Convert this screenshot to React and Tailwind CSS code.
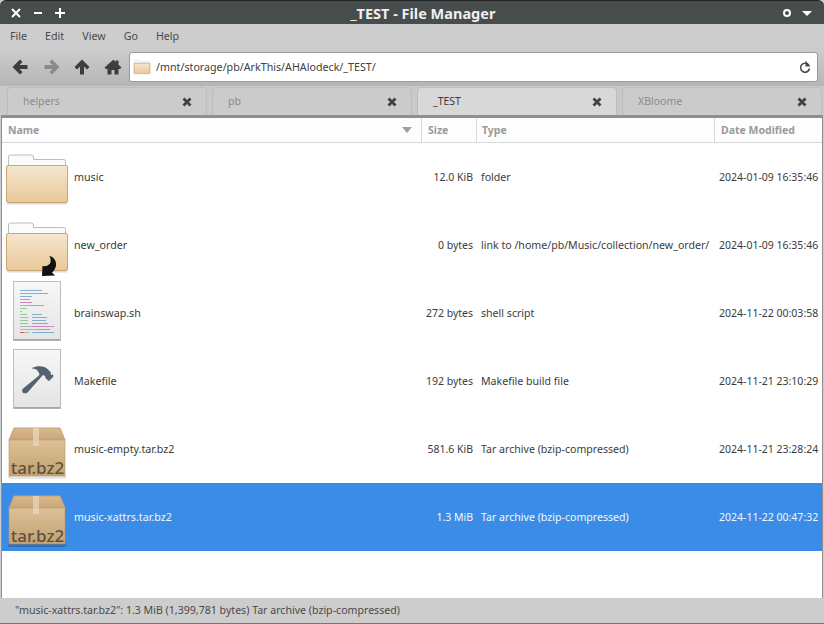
import React from "react";

const rows = [
  { name: "music", size: "12.0 KiB", type: "folder", date: "2024-01-09 16:35:46", icon: "folder" },
  { name: "new_order", size: "0 bytes", type: "link to /home/pb/Music/collection/new_order/", date: "2024-01-09 16:35:46", icon: "link" },
  { name: "brainswap.sh", size: "272 bytes", type: "shell script", date: "2024-11-22 00:03:58", icon: "script" },
  { name: "Makefile", size: "192 bytes", type: "Makefile build file", date: "2024-11-21 23:10:29", icon: "make" },
  { name: "music-empty.tar.bz2", size: "581.6 KiB", type: "Tar archive (bzip-compressed)", date: "2024-11-21 23:28:24", icon: "tar" },
  { name: "music-xattrs.tar.bz2", size: "1.3 MiB", type: "Tar archive (bzip-compressed)", date: "2024-11-22 00:47:32", icon: "tar", selected: true },
];

const tabs = [
  { label: "helpers" },
  { label: "pb" },
  { label: "_TEST", active: true },
  { label: "XBloome" },
];

// [colour, x, y, width] for the tiny code preview on the script icon
const codeLines = [
  ["#6fa8c8", 6, 7, 22], ["#6fa8c8", 6, 11, 28], ["#6fa8c8", 6, 15, 12], ["#6fa8c8", 6, 19, 10],
  ["#c56fc0", 6, 23, 12], ["#c58fb0", 6, 27, 10], ["#6fa8c8", 16, 27, 14], ["#7cc87c", 6, 31, 7],
  ["#aaaaaa", 6, 35, 2], ["#7cc87c", 6, 39, 7], ["#6fa8c8", 18, 39, 10], ["#7cc87c", 6, 43, 8],
  ["#6fa8c8", 18, 43, 15], ["#7cc87c", 6, 47, 8], ["#6fa8c8", 18, 47, 14], ["#7cc87c", 6, 51, 8],
  ["#6fa8c8", 18, 51, 16], ["#aaaaaa", 6, 55, 12], ["#d070b8", 18, 55, 22], ["#aaaaaa", 6, 59, 18],
  ["#d070b8", 24, 59, 12], ["#e53935", 6, 63, 4], ["#aaaaaa", 10, 63, 5], ["#6fa8c8", 18, 63, 22],
];

function FolderIcon({ link, small }) {
  return (
    <svg width={small ? 16 : 62} height={small ? 14 : 50} viewBox="0 0 62 50" preserveAspectRatio="none" className={small ? "overflow-visible" : "overflow-visible mt-[4px]"}>
      <defs>
        <linearGradient id="folderFill" x1="0" y1="0" x2="0" y2="1">
          <stop offset="0" stopColor="#f5e6d0" />
          <stop offset="1" stopColor="#e9c898" />
        </linearGradient>
      </defs>
      <path d="M2.500 12V3q0-2 2-2h21q2 0 2 2V5.500h30q2 0 2 2V12z" fill="#fbfbfb" stroke="#bdbdbd" />
      <rect x="0.500" y="11.500" width="61" height="37" rx="1.500" fill="url(#folderFill)" stroke="#c9a673" strokeWidth={small ? 3 : 1} />
      <rect x="1" y="49" width="60" height="1.500" fill="#dcdcdc" />
      {link && (
        <path d="M36 54 36.500 44c3.500.5 6-.5 7.500-2.500 1-2 1-4.500-.5-7.500 4.500 1 7 5 6.500 9.500-.5 3-2 5.500-4 7l3 3z" fill="#111" />
      )}
    </svg>
  );
}

function ScriptIcon() {
  return (
    <svg width="48" height="60" viewBox="0 0 48 60" className="mb-[4px]">
      <defs>
        <linearGradient id="paper" x1="0" y1="0" x2="0" y2="1">
          <stop offset="0" stopColor="#f7f7f7" />
          <stop offset="1" stopColor="#e4e4e4" />
        </linearGradient>
      </defs>
      <rect x="0.500" y="0.500" width="47" height="59" fill="url(#paper)" stroke="#bdbdbd" />
      <rect x="1" y="58" width="46" height="1.500" fill="#a8a8a8" />
      <g opacity="0.850">
        {codeLines.map(([color, x, y, w], i) => (
          <rect key={i} x={x + 1} y={y * 0.75 + 3.750} width={w} height="1" fill={color} />
        ))}
      </g>
    </svg>
  );
}

function MakeIcon() {
  return (
    <svg width="48" height="60" viewBox="0 0 48 60" className="mb-[4px]">
      <defs>
        <linearGradient id="paper2" x1="0" y1="0" x2="0" y2="1">
          <stop offset="0" stopColor="#f7f7f7" />
          <stop offset="1" stopColor="#e4e4e4" />
        </linearGradient>
      </defs>
      <rect x="0.500" y="0.500" width="47" height="59" fill="url(#paper2)" stroke="#bdbdbd" />
      <rect x="1" y="58" width="46" height="1.500" fill="#a8a8a8" />
      <path d="M19 19c5-2.500 11-2.500 15 .5l4 4-.5 1.500 1 1 1.500-.5 .5 .5-.5 1 .5 .5-4.500 4.500-1-.5-2.500-2.500-.5-2-2-1-15.500 17.500c-1 1-3 1-4.500 .5-1-1-1-3-.5-4L26 26.500 26.500 25l-2-3.500c-1.500-1.500-3.500-2-5.500-2z" fill="#556170" />
    </svg>
  );
}

function TarIcon({ selected }) {
  return (
    <svg width="58" height="52" viewBox="0 0 58 52" className="overflow-visible mt-[8px]">
      <defs>
        <linearGradient id="boxTop" x1="0" y1="0" x2="0" y2="1">
          <stop offset="0" stopColor="#d8b98f" />
          <stop offset="1" stopColor="#c9a677" />
        </linearGradient>
        <linearGradient id="boxFront" x1="0" y1="0" x2="0" y2="1">
          <stop offset="0" stopColor="#dcc096" />
          <stop offset="1" stopColor="#c2a272" />
        </linearGradient>
      </defs>
      <rect x="0" y="47" width="58" height="5" rx="2" fill={selected ? "#2f6fb8" : "#e6e6e6"} />
      <path d="M6 1h46l5 12H1z" fill="url(#boxTop)" stroke="#c4a275" />
      <rect x="1" y="13" width="56" height="36" fill="url(#boxFront)" stroke="#b8966a" strokeWidth="0.600" />
      <rect x="25" y="1" width="6" height="18" fill="#e9d8bd" opacity="0.700" />
      <text x="29.500" y="46.500" textAnchor="middle" fontSize="17" fontWeight="500" fill="#5f5141" fontFamily="'Noto Sans', sans-serif">tar.bz2</text>
    </svg>
  );
}

function RowIcon({ icon, selected }) {
  if (icon === "folder") return <FolderIcon />;
  if (icon === "link") return <FolderIcon link />;
  if (icon === "script") return <ScriptIcon />;
  if (icon === "make") return <MakeIcon />;
  return <TarIcon selected={selected} />;
}

function CloseGlyph() {
  return (
    <svg width="10" height="10" viewBox="0 0 10 10">
      <path d="M1.500 1.500l7 7M8.500 1.500l-7 7" stroke="#3f4243" strokeWidth="2.800" />
    </svg>
  );
}

function Tab({ label, active }) {
  return (
    <div className={`w-[200px] h-[30px] mt-px flex items-center justify-between pl-[15px] pr-[14px] pb-[2px] rounded-t-sm border border-b-0 border-[#bdbdbd] ${active ? "bg-[#d8d8d8] text-[#3b3b3b]" : "bg-[#cbcbcb] text-[#8c8c8c]"}`}>
      <span>{label}</span>
      <CloseGlyph />
    </div>
  );
}

function HeaderCell({ className, children }) {
  return (
    <div className={`flex items-center font-bold text-[#9a9a9a] ${className}`}>{children}</div>
  );
}

function NavIcon({ d, color = "#3d3d3d", w = 16, className }) {
  return (
    <svg width={w} height="16" viewBox={`0 0 ${w} 16`} className={className}>
      <path d={d} fill={color} />
    </svg>
  );
}

export default function App() {
  return (
    <div className="w-[824px] h-[624px] flex flex-col overflow-hidden bg-[#cdcdcd] text-[10.5px] leading-none text-[#3b3b3b] font-['Noto_Sans',sans-serif]">
      {/* titlebar */}
      <div className="h-6 shrink-0 relative flex items-center justify-between px-[11px] rounded-t-md border-t border-[#222] bg-[#474c4d] text-white">
        <div className="flex items-center gap-[12px]">
          <svg width="10" height="10" viewBox="0 0 10 10"><path d="M1 1l8 8M9 1l-8 8" stroke="#fff" strokeWidth="2" /></svg>
          <svg width="10" height="10" viewBox="0 0 10 10"><path d="M1 5h8" stroke="#fff" strokeWidth="2" /></svg>
          <svg width="10" height="10" viewBox="0 0 10 10"><path d="M0 5h10M5 0v10" stroke="#fff" strokeWidth="2" /></svg>
        </div>
        <span className="absolute left-[22px] right-0 top-[5px] text-center text-[14.5px] font-bold text-[#f0f0f0]">_TEST - File Manager</span>
        <div className="flex items-center gap-[10px] pr-[1px]">
          <svg width="10" height="10" viewBox="0 0 10 10"><circle cx="5" cy="5" r="3" fill="none" stroke="#fff" strokeWidth="2" /></svg>
          <svg width="10" height="10" viewBox="0 0 10 10"><path d="M0 3h10L5 8z" fill="#fff" /></svg>
        </div>
      </div>

      {/* menubar */}
      <div className="h-[24px] shrink-0 flex items-center gap-[18px] pl-[10px] pt-[1px] text-[#4a4a4a] text-[10.7px]">
        <span>File</span>
        <span>Edit</span>
        <span>View</span>
        <span>Go</span>
        <span>Help</span>
      </div>

      {/* toolbar */}
      <div className="h-[38px] shrink-0 flex items-center pl-[12px] pr-[6px] bg-gradient-to-b from-[#cdcdcd] to-[#b5b5b5]">
        <NavIcon d="M8 0.500 0.500 8 8 15.500 10.500 13 7.500 10H15.500V6H7.500L10.500 3z" />
        <NavIcon className="ml-[16px]" color="#8a8a8a" d="M8 0.500 15.500 8 8 15.500 5.500 13 8.500 10H0.500V6H8.500L5.500 3z" />
        <NavIcon className="ml-[14px]" d="M8 0.500 15.500 8 13 10.500 10 7.500V15.500H6V7.500L3 10.500 0.500 8z" />
        <NavIcon className="ml-[14px]" w={18} d="M9 1 0.500 8.500 2 10H3.500V15.500H7.500V11H10.500V15.500H14.500V10H16 L17.500 8.500 14.500 5.800V1.500H11.500V3.200L10 1z" />
        <div className="flex-1 h-[30px] ml-[7px] flex items-center justify-between pl-[4px] pr-[5px] bg-white border border-[#9a9a9a] rounded-[3px]">
          <div className="flex items-center gap-[6px] text-[#404040] text-[10.7px]">
            <FolderIcon small />
            <span>/mnt/storage/pb/ArkThis/AHAlodeck/_TEST/</span>
          </div>
          <svg width="12" height="14" viewBox="0 0 12 14" className="mr-[1px]">
            <path d="M9.800 5.200A4.500 4.500 0 1 0 10.500 8.500" fill="none" stroke="#4a4a4a" strokeWidth="1.600" />
            <path d="M6.500 0.500V6.500h5z" fill="#4a4a4a" />
          </svg>
        </div>
      </div>

      {/* tabs */}
      <div className="h-[30px] shrink-0 flex gap-[5px] pl-[7px] bg-[#c9c9c9]">
        {tabs.map((t) => (
          <Tab key={t.label} label={t.label} active={t.active} />
        ))}
      </div>

      {/* file list */}
      <div className="flex-1 min-h-0 mx-[2px] flex flex-col bg-white border-t-2 border-[#8f8f8f] outline outline-1 outline-[#8f8f8f]">
        <div className="h-[25px] shrink-0 flex border-b border-[#d9d9d9] bg-[#fdfdfd]">
          <HeaderCell className="w-[420px] justify-between pl-[6px] pr-[9px] border-r border-[#d9d9d9]">
            <span>Name</span>
            <svg width="10" height="6" viewBox="0 0 10 6"><path d="M0 0h10L5 6z" fill="#9f9f9f" /></svg>
          </HeaderCell>
          <HeaderCell className="w-[55px] pl-[6px] border-r border-[#d9d9d9]">Size</HeaderCell>
          <HeaderCell className="w-[238px] pl-[5px] border-r border-[#d9d9d9]">Type</HeaderCell>
          <HeaderCell className="flex-1 pl-[6px]">Date Modified</HeaderCell>
        </div>
        {rows.map((r) => (
          <div key={r.name} className={`h-[68px] shrink-0 flex items-center ${r.selected ? "bg-[#3a8ce6] text-[#f2f7fd]" : "text-[#3b3b3b]"}`}>
            <div className="w-[420px] flex items-center">
              <div className="w-[72px] h-[68px] flex items-center justify-center pr-[3px]">
                <RowIcon icon={r.icon} selected={r.selected} />
              </div>
              <span className="text-[10.7px]">{r.name}</span>
            </div>
            <div className="w-[55px] text-right pr-[4px]">{r.size}</div>
            <div className="w-[238px] pl-[4px] whitespace-nowrap text-[10.6px]">{r.type}</div>
            <div className="flex-1 pl-[4px] whitespace-nowrap">{r.date}</div>
          </div>
        ))}
      </div>

      {/* statusbar */}
      <div className="h-[26px] shrink-0 flex items-center pl-[15px] border-b border-[#777] text-[#4a4a4a] text-[10.6px] bg-[#cdcdcd]">
        "music-xattrs.tar.bz2": 1.3 MiB (1,399,781 bytes) Tar archive (bzip-compressed)
      </div>
    </div>
  );
}
